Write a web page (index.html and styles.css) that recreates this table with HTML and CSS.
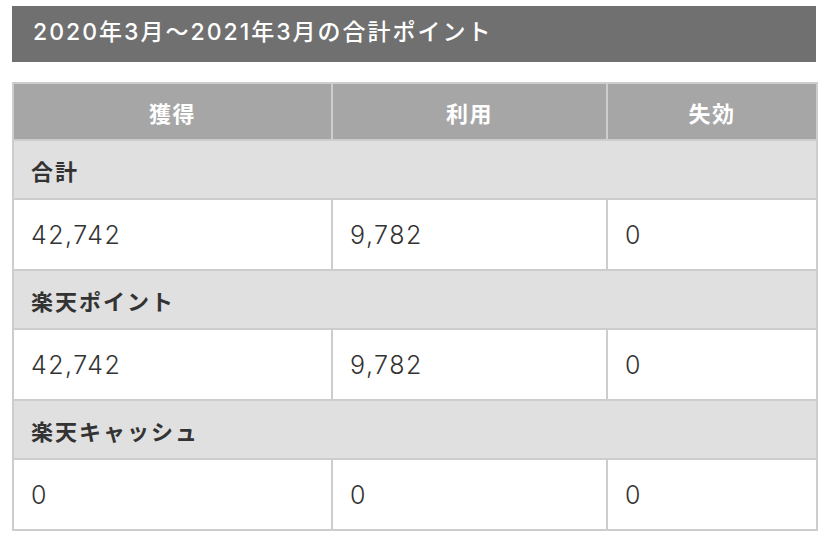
FILE: index.html
```html
<!DOCTYPE html>
<html lang="ja">
<head>
<meta charset="utf-8">
<link rel="stylesheet" href="styles.css">
</head>
<body>
<div class="page">
  <h2 class="title">2020年3月〜2021年3月の合計ポイント</h2>
  <table class="points">
    <colgroup>
      <col class="c1"><col class="c2"><col class="c3">
    </colgroup>
    <thead>
      <tr><th>獲得</th><th>利用</th><th>失効</th></tr>
    </thead>
    <tbody>
      <tr class="section"><td colspan="3">合計</td></tr>
      <tr class="data"><td>42,742</td><td>9,782</td><td>0</td></tr>
      <tr class="section"><td colspan="3">楽天ポイント</td></tr>
      <tr class="data"><td>42,742</td><td>9,782</td><td>0</td></tr>
      <tr class="section"><td colspan="3">楽天キャッシュ</td></tr>
      <tr class="data"><td>0</td><td>0</td><td>0</td></tr>
    </tbody>
  </table>
</div>
</body>
</html>
```

FILE: styles.css
```css
html, body {
  margin: 0;
  padding: 0;
  background: #ffffff;
}
body {
  font-family: Inter, "Noto Sans CJK JP", "Noto Sans", sans-serif;
  color: #333333;
}
.page {
  width: 804px;
  padding: 6px 0 0 12px;
}
.title {
  margin: 0;
  height: 56px;
  box-sizing: border-box;
  background: #707070;
  color: #ffffff;
  font-size: 23px;
  font-weight: 500;
  line-height: 52px;
  padding-left: 21px;
  letter-spacing: 2px;
}
.points {
  margin-top: 20px;
  width: 804px;
  border-collapse: collapse;
  table-layout: fixed;
  border: 2px solid #cdcdcd;
}
.c1 { width: 319px; }
.c2 { width: 275px; }
.c3 { width: 210px; }
.points th,
.points td {
  border: 2px solid #cdcdcd;
  padding: 0 0 0 17px;
  text-align: left;
}
.points th {
  background: #a6a6a6;
  color: #ffffff;
  font-size: 22px;
  font-weight: 700;
  letter-spacing: 1.5px;
  text-align: center;
  padding: 0;
  height: 55px;
}
.section td {
  background: #e0e0e0;
  font-size: 22px;
  font-weight: 700;
  letter-spacing: 2px;
  color: #333333;
  height: 57px;
}
.data td {
  background: #ffffff;
  font-size: 25px;
  font-weight: 300;
  letter-spacing: 1.5px;
  color: #333333;
  height: 69px;
}
```
